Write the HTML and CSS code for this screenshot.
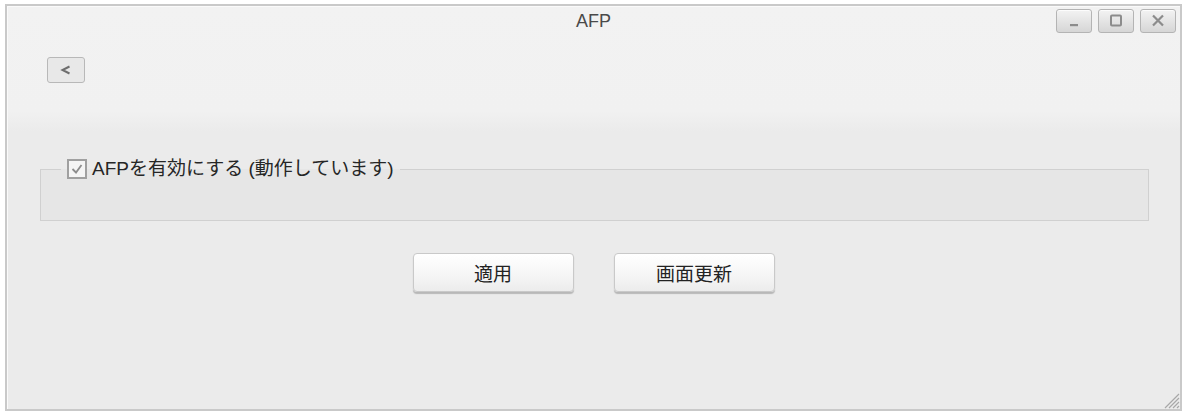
FILE: index.html
```html
<!DOCTYPE html>
<html lang="ja">
<head>
  <meta charset="UTF-8">
  <title>AFP</title>
  <link rel="stylesheet" href="styles.css">
</head>
<body>

<div class="window">
  <div class="titlebar">
    <div></div>
    <div class="title">AFP</div>
    <div class="controls">
      <span class="ctl">
        <svg width="16" height="14" viewBox="0 0 16 14"><rect x="4" y="10" width="8" height="2.2" fill="#8c8c8c"/></svg>
      </span>
      <span class="ctl">
        <svg width="16" height="14" viewBox="0 0 16 14"><rect x="3" y="1.5" width="10" height="10" rx="1" fill="none" stroke="#8c8c8c" stroke-width="2"/></svg>
      </span>
      <span class="ctl">
        <svg width="16" height="14" viewBox="0 0 16 14"><path d="M3 1.5 L13 11.5 M13 1.5 L3 11.5" stroke="#8c8c8c" stroke-width="2.2"/></svg>
      </span>
    </div>
  </div>

  <button class="back">
    <svg width="12" height="12" viewBox="0 0 12 12"><path d="M9.5 2.5 L2.5 6 L9.5 9.5" fill="none" stroke="#6e6e6e" stroke-width="2"/></svg>
  </button>

  <fieldset class="group">
    <legend>
      <label class="check">
        <span class="box">
          <svg width="16" height="16" viewBox="0 0 16 16"><path d="M3.5 8 L7 11.5 L12.5 4" fill="none" stroke="#8d8d8d" stroke-width="1.8"/></svg>
        </span>
        AFPを有効にする (動作しています)
      </label>
    </legend>
  </fieldset>

  <div class="actions">
    <button class="btn">適用</button>
    <button class="btn">画面更新</button>
  </div>

  <svg class="grip" width="18" height="18" viewBox="0 0 18 18">
    <path d="M17 3 L3 17 M17 7 L7 17 M17 11 L11 17 M17 15 L15 17" stroke="#a8a8a8" stroke-width="1.2"/>
  </svg>
</div>

</body>
</html>
```

FILE: styles.css
```css
body {
  margin: 0;
  background: #ffffff;
  font-family: "Liberation Sans", "Noto Sans CJK JP", sans-serif;
  color: #333;
}
.window {
  position: relative;
  box-sizing: border-box;
  width: 1177px;
  height: 407px;
  margin: 4px 0 0 5px;
  border: 2px solid #c9c9c9;
  box-shadow: inset 1px 1px 0 #fafafa;
  background: linear-gradient(#f2f2f2 0, #f1f1f1 105px, #ebebeb 125px, #ebebeb 100%);
}
.titlebar {
  display: grid;
  grid-template-columns: 1fr auto 1fr;
  align-items: center;
  padding: 3px 4px 0 0;
  height: 24px;
}
.title {
  font-size: 18px;
  color: #4a4a4a;
  padding-left: 4px;
}
.controls {
  display: flex;
  justify-content: flex-end;
  gap: 6px;
}
.ctl {
  box-sizing: border-box;
  width: 36px;
  height: 24px;
  border: 1px solid #b4b4b4;
  border-radius: 3px;
  background: linear-gradient(#f3f3f3, #d6d6d6);
  box-shadow: inset 0 1px 0 #fcfcfc;
  display: flex;
  align-items: center;
  justify-content: center;
}
.back {
  display: flex;
  align-items: center;
  justify-content: center;
  box-sizing: border-box;
  width: 38px;
  height: 26px;
  margin: 24px 0 0 40px;
  padding: 0;
  border: 1px solid #b8b8b8;
  border-radius: 3px;
  background: #e8e8e8;
}
.group {
  box-sizing: border-box;
  margin: 75px 31px 0 33px;
  padding: 0 0 40px;
  border: 1px solid #d0d0d0;
  background: #e6e6e6;
}
.group legend {
  margin-left: 20px;
  padding: 0 6px;
  height: 22px;
}
.check {
  display: flex;
  align-items: center;
  gap: 5px;
  font-size: 19px;
  line-height: 22px;
  color: #262626;
}
.box {
  flex: 0 0 20px;
  box-sizing: border-box;
  width: 20px;
  height: 20px;
  border: 2px solid #a0a0a0;
  background: #f5f5f5;
  display: flex;
  align-items: center;
  justify-content: center;
}
.actions {
  display: flex;
  justify-content: center;
  gap: 40px;
  margin-top: 32px;
}
.btn {
  box-sizing: border-box;
  width: 161px;
  height: 39px;
  border: 1px solid #c9c9c9;
  border-radius: 4px;
  background: linear-gradient(#ffffff, #f5f5f5 60%, #ececec);
  box-shadow: 0 2px 1px #b8b8b8;
  font-family: "Liberation Sans", "Noto Sans CJK JP", sans-serif;
  font-size: 19px;
  color: #222;
}
.grip {
  position: absolute;
  right: 0;
  bottom: 0;
}
```
